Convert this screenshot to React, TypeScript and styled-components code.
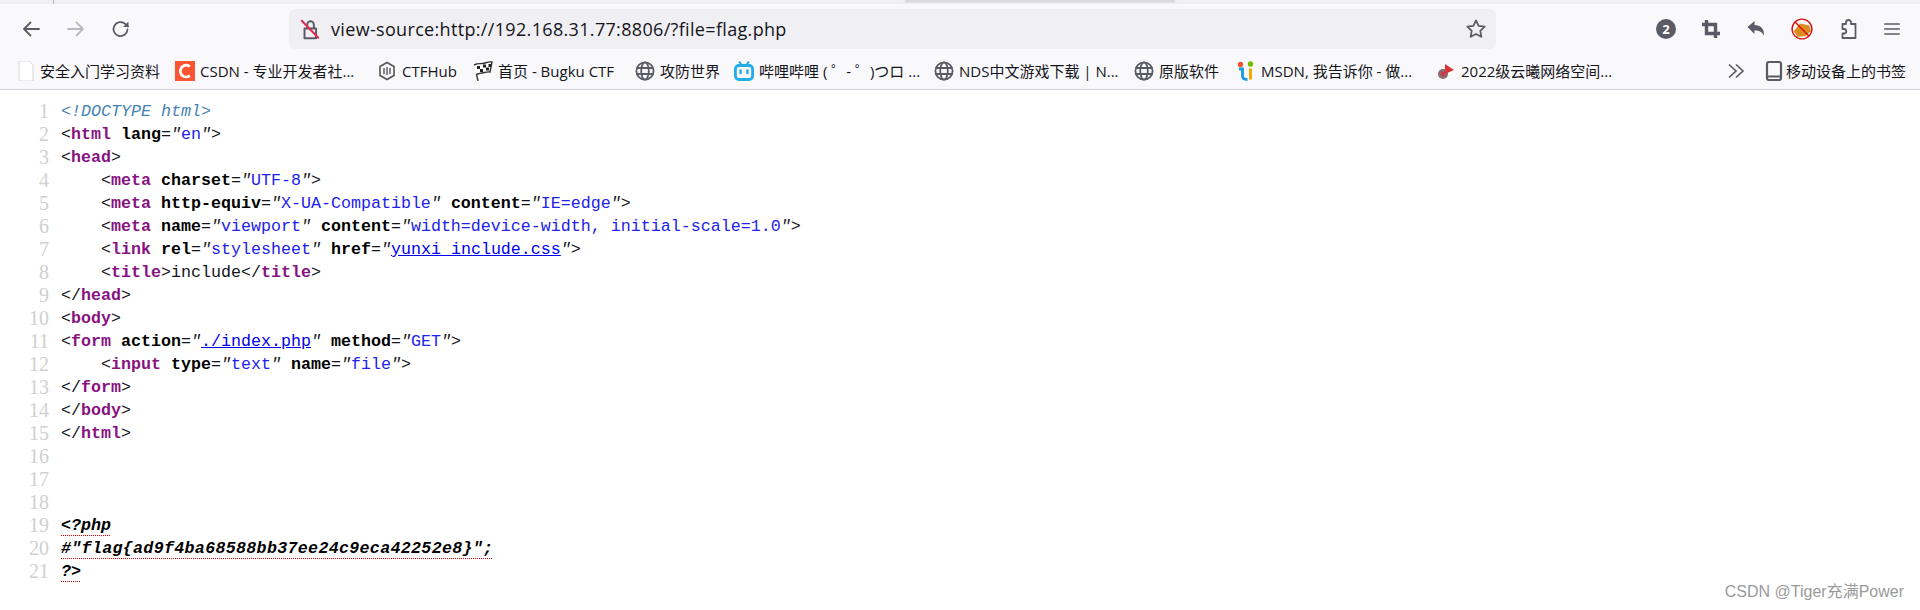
import React from "react";
import styled, { createGlobalStyle } from "styled-components";

const Global = createGlobalStyle`
  html, body { margin: 0; padding: 0; background: #fff; }
  body { width: 1920px; height: 610px; overflow: hidden; position: relative; }
`;

const Page = styled.div`
  width: 1920px;
  height: 610px;
  display: flex;
  flex-direction: column;
  position: relative;
  overflow: hidden;
  font-family: "Open Sans", "Noto Sans CJK SC", sans-serif;
`;
const TabStrip = styled.div`
  height: 4px;
  background: #f0f0f4;
  position: relative;
  flex: none;
`;
const TabEdge = styled.div`
  position: absolute;
  left: 53px;
  top: 0;
  width: 1px;
  height: 4px;
  background: #b5b5bb;
`;
const TabShadow = styled.div`
  position: absolute;
  left: 905px;
  top: 0;
  width: 270px;
  height: 1px;
  background: #d8d8dc;
  box-shadow: 0 1px 2px rgba(0, 0, 0, 0.2);
`;
const Toolbar = styled.div`
  height: 45px;
  background: #f9f9fb;
  display: flex;
  align-items: center;
  flex: none;
  padding: 5px 22px 0 21px;
  box-sizing: border-box;
`;
const NavGroup = styled.div`
  display: flex;
  gap: 25px;
  width: 268px;
  flex: none;
  align-items: center;
`;
const UrlBar = styled.div`
  width: 1207px;
  height: 40px;
  flex: none;
  background: #f0f0f4;
  border-radius: 6px;
  display: flex;
  align-items: center;
  padding: 0 9px 0 10px;
  box-sizing: border-box;
`;
const UrlText = styled.span`
  flex: 1;
  margin-left: 10px;
  font-size: 18px;
  color: #15141a;
  letter-spacing: 0.33px;
`;
const Actions = styled.div`
  display: flex;
  align-items: center;
  gap: 25px;
  margin-left: 160px;
`;
const Bookmarks = styled.div`
  height: 41px;
  background: #f9f9fb;
  border-bottom: 1px solid #cfcfd8;
  box-sizing: border-box;
  display: flex;
  align-items: center;
  flex: none;
  padding: 3px 0 0 18px;
`;
const Mark = styled.div<{ $w: number; $gap?: number }>`
  display: flex;
  align-items: center;
  flex: none;
  width: ${(p) => p.$w}px;
  gap: ${(p) => p.$gap ?? 5}px;
  font-size: 15px;
  color: #15141a;
  white-space: nowrap;
`;
const Fav = styled.svg`
  width: 20px;
  height: 20px;
  flex: none;
`;
const Overflow = styled.div`
  margin-left: auto;
  display: flex;
  align-items: center;
  padding-right: 14px;
  gap: 2px;
  font-size: 15px;
  color: #15141a;
`;
const Chevrons = styled.svg`
  width: 18px;
  height: 18px;
  margin-right: 17px;
`;
const Code = styled.main`
  flex: 1;
  background: #fff;
  padding-top: 10px;
  font-family: "Liberation Mono", "DejaVu Sans Mono", monospace;
  font-size: 16.67px;
  line-height: 23px;
  color: #15141a;
  white-space: pre;
`;
const Line = styled.div`
  display: flex;
  height: 23px;
`;
const Num = styled.span`
  width: 49px;
  text-align: right;
  color: #d0d0d0;
  margin-right: 12px;
  flex: none;
  font-family: "Liberation Serif", serif;
  font-size: 20px;
`;
const Tag = styled.b`
  color: #881280;
  font-weight: 700;
`;
const Attr = styled.b`
  color: #000;
  font-weight: 700;
`;
const Val = styled.span`
  color: #2222ee;
`;
const Quote = styled.i`
  color: #222;
`;
const Href = styled.span`
  color: #0000ee;
  text-decoration: underline;
`;
const Doctype = styled.span`
  color: #4682b4;
  font-style: italic;
`;
const Pi = styled.span<{ $wide?: boolean }>`
  font-style: italic;
  font-weight: 700;
  color: #000;
  letter-spacing: ${(p) => (p.$wide ? "0.3px" : "0")};
  text-decoration: underline dotted #e00000 1px;
  text-underline-offset: 5px;
`;
const Watermark = styled.div`
  position: absolute;
  right: 16px;
  bottom: 8px;
  font-size: 16px;
  font-family: "Liberation Sans", "Noto Sans CJK SC", sans-serif;
  color: #9a9a9a;
`;

const Stroke = { fill: "none", stroke: "#5b5b66", strokeWidth: 1.8, strokeLinecap: "round", strokeLinejoin: "round" } as const;

const Icon: React.FC<{ size?: number; children: React.ReactNode }> = ({ size = 20, children }) => (
  <svg width={size} height={size} viewBox="0 0 20 20" style={{ flex: "none" }}>
    {children}
  </svg>
);

const Globe = () => (
  <Fav viewBox="0 0 20 20">
    <g fill="none" stroke="#5b5b66" strokeWidth="1.8">
      <circle cx="10" cy="10" r="8.6" />
      <ellipse cx="10" cy="10" rx="3.8" ry="8.6" />
      <path d="M1.6 7h16.8M1.6 13h16.8" />
    </g>
  </Fav>
);

const V = ({ children }: { children: string }) => (
  <>
    <Quote>"</Quote>
    <Val>{children}</Val>
    <Quote>"</Quote>
  </>
);
const H = ({ children }: { children: string }) => (
  <>
    <Quote>"</Quote>
    <Href>{children}</Href>
    <Quote>"</Quote>
  </>
);

const Ln: React.FC<{ n: number; children?: React.ReactNode }> = ({ n, children }) => (
  <Line>
    <Num>{n}</Num>
    <span>{children}</span>
  </Line>
);

export default function App() {
  return (
    <Page>
      <Global />
      <TabStrip>
        <TabEdge />
        <TabShadow />
      </TabStrip>
      <Toolbar>
        <NavGroup>
          <Icon>
            <path d="M18 10H3M9.5 3.5 3 10l6.5 6.5" {...Stroke} />
          </Icon>
          <Icon>
            <path d="M2 10h15M10.5 3.5 17 10l-6.5 6.5" {...Stroke} stroke="#b9b9bf" />
          </Icon>
          <Icon>
            <path d="M16.5 10.500a7 7 0 1 1-2.300-5.600L17 7.500" {...Stroke} />
            <path d="M17.500 2.500v5.500H12z" fill="#5b5b66" />
          </Icon>
        </NavGroup>
        <UrlBar>
          <Icon size={22}>
            <path d="M5 9.500h10.500v9H5zM7.500 9.500V6a3 3 0 0 1 6 0v3.500" {...Stroke} />
            <path d="M2.500 2.500 17.500 18" stroke="#e22850" strokeWidth="1.800" strokeLinecap="round" />
          </Icon>
          <UrlText>view-source:http://192.168.31.77:8806/?file=flag.php</UrlText>
          <Icon size={22}>
            <path d="m10 2.200 2.400 5 5.500.7-4 3.800 1 5.400-4.900-2.600-4.900 2.600 1-5.400-4-3.800 5.500-.7z" {...Stroke} strokeWidth={1.6} />
          </Icon>
        </UrlBar>
        <Actions>
          <svg width="20" height="20" viewBox="0 0 20 20">
            <circle cx="10" cy="10" r="10" fill="#5b5b66" />
            <text x="10" y="14.500" textAnchor="middle" fontSize="13" fontWeight="700" fontFamily="Open Sans" fill="#fff">2</text>
          </svg>
          <Icon>
            <path d="M5.500 1v13.500H19M1 5.500h13.500V19" fill="none" stroke="#5b5b66" strokeWidth="3.400" />
          </Icon>
          <Icon>
            <path d="M1.500 8 8.500 2v4c6 0 10 3.500 9.500 11-1.500-4-4.500-5.500-9.500-5.500V15z" fill="#5b5b66" />
          </Icon>
          <Icon size={22}>
            <circle cx="10" cy="10" r="9" fill="#fff" />
            <path d="M2.500 12 8 5l8.500 1.500L18 12l-5 4.500-7 .5z" fill="#dd8a1e" />
            <circle cx="10" cy="10" r="9" fill="none" stroke="#d81010" strokeWidth="1.300" />
            <path d="M3.500 3.500 16.500 16.500" stroke="#d81010" strokeWidth="1.300" />
          </Icon>
          <Icon>
            <path d="M8 5V3.500a2.500 2.500 0 0 1 5 0V5h4.500v14H4.500v-4.500H6a2.250 2.250 0 0 0 0-4.500H4.500V5z" {...Stroke} />
          </Icon>
          <Icon size={18}>
            <path d="M2 4.500h16M2 10h16M2 15.500h16" {...Stroke} />
          </Icon>
        </Actions>
      </Toolbar>
      <Bookmarks>
        <Mark $w={157} $gap={2}>
          <Fav viewBox="0 0 20 20">
            <path d="M1 0h10l4 4v16H1z" fill="#fff" stroke="#d8d8d8" />
          </Fav>
          安全入门学习资料
        </Mark>
        <Mark $w={202}>
          <Fav viewBox="0 0 20 20">
            <rect width="20" height="20" fill="#fc5531" />
            <path d="M14.800 5.500A5.800 5.800 0 0 0 7 6c-2.200 2.400-2.200 5.800 0 8.200a5.800 5.800 0 0 0 7.800.4" fill="none" stroke="#fff" strokeWidth="2.800" />
          </Fav>
          CSDN - 专业开发者社...
        </Mark>
        <Mark $w={96}>
          <Fav viewBox="0 0 20 20">
            <path d="M10 1.500 17 5.500v9l-7 4-7-4v-9z" fill="none" stroke="#555" strokeWidth="1.600" />
            <path d="M7 7v6M10 6v8M13 7v6" stroke="#555" strokeWidth="1.400" />
          </Fav>
          CTFHub
        </Mark>
        <Mark $w={162}>
          <Fav viewBox="0 0 20 20">
            <path d="M1 4c4-2 6-1 9-1.500S15 0.500 19 1l-2 10c-3-.5-5 .5-8 1s-5 1-5.500 1.500L5 20" fill="#fff" stroke="#333" strokeWidth="1.400" />
            <path d="M4 5h3v3H4zM10 3.500h3v3h-3zM15.500 3h2.500v3h-2.500zM7 8h3v3H7zM13 6.500h3v3h-3z" fill="#222" />
          </Fav>
          首页 - Bugku CTF
        </Mark>
        <Mark $w={99}>
          <Globe />
          攻防世界
        </Mark>
        <Mark $w={200}>
          <Fav viewBox="0 0 20 20">
            <rect x="1.400" y="4.500" width="17.200" height="14" rx="3.500" fill="none" stroke="#23ade5" strokeWidth="2.800" />
            <path d="M5 0.500 8 4.500M15 0.500 12 4.500" stroke="#23ade5" strokeWidth="2" />
            <path d="M6.500 9.500v2.500M13.500 9.500v2.500" stroke="#23ade5" strokeWidth="2.400" strokeLinecap="round" />
          </Fav>
          哔哩哔哩 ( ゜- ゜)つロ ...
        </Mark>
        <Mark $w={200}>
          <Globe />
          NDS中文游戏下载 | N...
        </Mark>
        <Mark $w={102}>
          <Globe />
          原版软件
        </Mark>
        <Mark $w={200}>
          <Fav viewBox="0 0 20 20">
            <circle cx="4.500" cy="3.500" r="2.700" fill="#f0542c" />
            <circle cx="14.500" cy="3" r="2.700" fill="#7ab800" />
            <path d="M3 8h3.500v7c0 2.500 1.500 3.500 5 3.500" fill="none" stroke="#1a9ae0" strokeWidth="2.800" />
            <path d="M14.500 7.500v11" stroke="#f5a800" strokeWidth="3" />
          </Fav>
          MSDN, 我告诉你 - 做...
        </Mark>
        <Mark $w={180}>
          <Fav viewBox="0 0 20 20">
            <circle cx="7" cy="13" r="5" fill="#8c6a70" />
            <circle cx="7" cy="13" r="2" fill="#e03040" />
            <path d="M9 3 18 9l-9 4z" fill="#d8343a" />
          </Fav>
          2022级云曦网络空间...
        </Mark>
        <Overflow>
          <Chevrons viewBox="0 0 18 18">
            <path d="M2 2.500 9 9l-7 6.500M9 2.500 16 9l-7 6.500" fill="none" stroke="#5b5b66" strokeWidth="1.700" />
          </Chevrons>
          <Icon>
            <rect x="3" y="1" width="14" height="18" rx="2" fill="none" stroke="#5b5b66" strokeWidth="2.200" />
            <path d="M3 15.500h14" stroke="#5b5b66" strokeWidth="2" />
          </Icon>
          移动设备上的书签
        </Overflow>
      </Bookmarks>
      <Code>
        <Ln n={1}><Doctype>{"<!DOCTYPE html>"}</Doctype></Ln>
        <Ln n={2}>{"<"}<Tag>html</Tag> <Attr>lang</Attr>=<V>en</V>{">"}</Ln>
        <Ln n={3}>{"<"}<Tag>head</Tag>{">"}</Ln>
        <Ln n={4}>{"    <"}<Tag>meta</Tag> <Attr>charset</Attr>=<V>UTF-8</V>{">"}</Ln>
        <Ln n={5}>{"    <"}<Tag>meta</Tag> <Attr>http-equiv</Attr>=<V>X-UA-Compatible</V> <Attr>content</Attr>=<V>IE=edge</V>{">"}</Ln>
        <Ln n={6}>{"    <"}<Tag>meta</Tag> <Attr>name</Attr>=<V>viewport</V> <Attr>content</Attr>=<V>width=device-width, initial-scale=1.0</V>{">"}</Ln>
        <Ln n={7}>{"    <"}<Tag>link</Tag> <Attr>rel</Attr>=<V>stylesheet</V> <Attr>href</Attr>=<H>yunxi_include.css</H>{">"}</Ln>
        <Ln n={8}>{"    <"}<Tag>title</Tag>{">include</"}<Tag>title</Tag>{">"}</Ln>
        <Ln n={9}>{"</"}<Tag>head</Tag>{">"}</Ln>
        <Ln n={10}>{"<"}<Tag>body</Tag>{">"}</Ln>
        <Ln n={11}>{"<"}<Tag>form</Tag> <Attr>action</Attr>=<H>./index.php</H> <Attr>method</Attr>=<V>GET</V>{">"}</Ln>
        <Ln n={12}>{"    <"}<Tag>input</Tag> <Attr>type</Attr>=<V>text</V> <Attr>name</Attr>=<V>file</V>{">"}</Ln>
        <Ln n={13}>{"</"}<Tag>form</Tag>{">"}</Ln>
        <Ln n={14}>{"</"}<Tag>body</Tag>{">"}</Ln>
        <Ln n={15}>{"</"}<Tag>html</Tag>{">"}</Ln>
        <Ln n={16} />
        <Ln n={17} />
        <Ln n={18} />
        <Ln n={19}><Pi>{"<?php"}</Pi></Ln>
        <Ln n={20}><Pi $wide>{'#"flag{ad9f4ba68588bb37ee24c9eca42252e8}";'}</Pi></Ln>
        <Ln n={21}><Pi>{"?>"}</Pi></Ln>
      </Code>
      <Watermark>CSDN @Tiger充满Power</Watermark>
    </Page>
  );
}
